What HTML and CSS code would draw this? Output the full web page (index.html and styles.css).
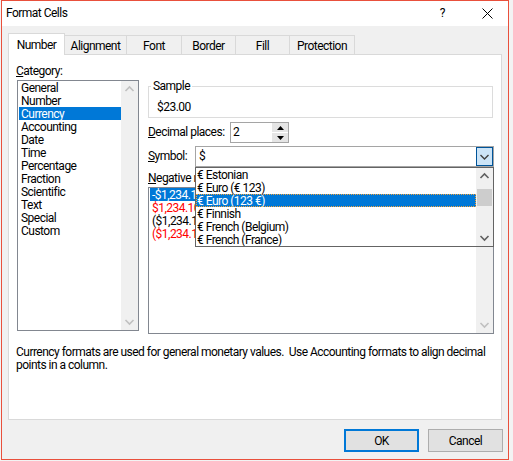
FILE: index.html
```html
<!DOCTYPE html>
<html lang="en">
<head>
    <meta charset="UTF-8">
    <title>Format Cells</title>
    <link rel="stylesheet" href="styles.css">
</head>
<body>
<div class="window">
    <div class="titlebar">
        <span class="title">Format Cells</span>
        <span class="help">?</span>
        <svg class="close" width="11" height="11" viewBox="0 0 11 11">
            <path d="M0.5 0.5L10.5 10.5M10.5 0.5L0.5 10.5" stroke="#000" stroke-width="1"/>
        </svg>
    </div>

    <div class="tabs">
        <div class="tab active tab-number">Number</div>
        <div class="tab tab-alignment">Alignment</div>
        <div class="tab tab-font">Font</div>
        <div class="tab tab-border">Border</div>
        <div class="tab tab-fill">Fill</div>
        <div class="tab tab-protection">Protection</div>
    </div>

    <div class="panel">
        <div class="columns">
            <div class="cat-col">
                <div class="label"><u>C</u>ategory:</div>
                <div class="listbox cat-list">
                    <ul class="items">
                        <li>General</li>
                        <li>Number</li>
                        <li class="selected">Currency</li>
                        <li>Accounting</li>
                        <li>Date</li>
                        <li>Time</li>
                        <li>Percentage</li>
                        <li>Fraction</li>
                        <li>Scientific</li>
                        <li>Text</li>
                        <li>Special</li>
                        <li>Custom</li>
                    </ul>
                    <div class="vscroll disabled">
                        <svg class="arrow" width="17" height="17"><polyline points="4.5,10 8.5,6 12.5,10"/></svg>
                        <svg class="arrow" width="17" height="17"><polyline points="4.5,7 8.5,11 12.5,7"/></svg>
                    </div>
                </div>
            </div>

            <div class="right-col">
                <fieldset class="sample">
                    <legend>Sample</legend>
                    <div class="sample-value">$23.00</div>
                </fieldset>

                <div class="field-row decimals">
                    <label><u>D</u>ecimal places:</label>
                    <div class="spin-input">
                        <span class="value">2</span>
                        <div class="spinner">
                            <span class="spin-btn"><svg width="7" height="4"><polygon points="0,4 3.5,0 7,4"/></svg></span>
                            <span class="spin-btn"><svg width="7" height="4"><polygon points="0,0 3.5,4 7,0"/></svg></span>
                        </div>
                    </div>
                </div>

                <div class="field-row symbol">
                    <label><u>S</u>ymbol:</label>
                    <div class="combo">
                        <span class="value">$</span>
                        <span class="drop-btn">
                            <svg width="15" height="17"><polyline points="3.5,7 7.5,11 11.5,7"/></svg>
                        </span>
                        <div class="dropdown">
                            <ul class="items">
                                <li>€ Estonian</li>
                                <li>€ Euro (€ 123)</li>
                                <li class="selected focus">€ Euro (123 €)</li>
                                <li>€ Finnish</li>
                                <li>€ French (Belgium)</li>
                                <li>€ French (France)</li>
                            </ul>
                            <div class="vscroll">
                                <svg class="arrow" width="17" height="17"><polyline points="4.5,10 8.5,6 12.5,10"/></svg>
                                <div class="thumb"></div>
                                <svg class="arrow down" width="17" height="17"><polyline points="4.5,7 8.5,11 12.5,7"/></svg>
                            </div>
                        </div>
                    </div>
                </div>

                <div class="label neg-label"><u>N</u>egative numbers:</div>
                <div class="listbox neg-list">
                    <ul class="items">
                        <li class="selected">-$1,234.10</li>
                        <li class="red">$1,234.10</li>
                        <li>($1,234.10)</li>
                        <li class="red">($1,234.10)</li>
                    </ul>
                    <div class="vscroll disabled">
                        <svg class="arrow" width="17" height="17"><polyline points="4.5,10 8.5,6 12.5,10"/></svg>
                        <svg class="arrow" width="17" height="17"><polyline points="4.5,7 8.5,11 12.5,7"/></svg>
                    </div>
                </div>
            </div>
        </div>

        <p class="desc">Currency formats are used for general monetary values.&nbsp; Use Accounting formats to align decimal points in a column.</p>
    </div>

    <div class="buttons">
        <button class="btn default">OK</button>
        <button class="btn">Cancel</button>
    </div>
</div>
</body>
</html>
```

FILE: styles.css
```css
* {
    box-sizing: border-box;
}

body {
    margin: 0;
    width: 513px;
    height: 461px;
    overflow: hidden;
    background: #f3f3f3;
    font-family: Roboto, "Noto Sans", sans-serif;
    font-size: 12px;
    letter-spacing: -0.52px;
    line-height: 13px;
    color: #000;
}

.window {
    margin-left: 1px;
    width: 508px;
    height: 460px;
    border: 1px solid #e9503c;
    background: #f0f0f0;
}

/* title bar */

.titlebar {
    height: 25px;
    background: #fff;
    display: flex;
    align-items: center;
}

.title {
    margin-left: 4px;
    flex: 1;
}

.help {
    margin-right: 37px;
}

.close {
    margin-right: 15px;
}

/* tabs */

.tabs {
    display: flex;
    align-items: flex-end;
    height: 21px;
    margin: 7px 0 0 6px;
}

.tab {
    height: 19px;
    padding-top: 2px;
    line-height: 17px;
    text-align: center;
    border: 1px solid #d9d9d9;
    border-bottom: 0;
    margin-left: -1px;
    background: #f0f0f0;
}

.tab.active {
    height: 22px;
    margin-left: 0;
    margin-bottom: -1px;
    padding-top: 3px;
    line-height: 17px;
    background: #fff;
    position: relative;
    z-index: 1;
}

.tab-number { width: 57px; }
.tab-alignment { width: 63px; }
.tab-font { width: 56px; }
.tab-border { width: 55px; }
.tab-fill { width: 55px; }
.tab-protection { width: 66px; }

/* panel */

.panel {
    margin: 0 6px;
    height: 366px;
    border: 1px solid #d9d9d9;
    background: #fff;
    padding: 9px 0 0 7px;
}

.columns {
    display: flex;
    align-items: flex-start;
}

.label {
    line-height: 14px;
}

.cat-col {
    display: flex;
    flex-direction: column;
}

.listbox {
    border: 1px solid #828790;
    background: #fff;
    display: flex;
}

.cat-list {
    width: 122px;
    height: 251px;
    margin: 2px 0 0 1px;
}

.items {
    flex: 1;
    list-style: none;
    margin: 0;
    padding: 0;
    overflow: hidden;
}

.items li {
    height: 13px;
    line-height: 14px;
    margin-left: 1px;
    padding-left: 2px;
    white-space: nowrap;
}

.items li.selected {
    background: #0078d7;
    color: #fff;
}

.items li.red {
    color: #ff0000;
}

.vscroll {
    width: 17px;
    background: #f0f0f0;
    display: flex;
    flex-direction: column;
    justify-content: space-between;
}

.arrow polyline {
    fill: none;
    stroke: #606060;
    stroke-width: 1.6;
}

.vscroll.disabled .arrow polyline {
    stroke: #c0c0c0;
}

.right-col {
    margin-left: 9px;
    width: 346px;
}

.sample {
    width: 345px;
    margin: 15px 0 0;
    padding: 7px 2px 3px;
    border: 1px solid #dcdcdc;
}

.sample legend {
    padding: 0 2px;
    line-height: 14px;
}

.sample-value {
    padding-left: 6px;
    line-height: 14px;
}

.field-row {
    display: flex;
    align-items: center;
}

.decimals {
    margin-top: 4px;
}

.decimals label {
    width: 82px;
}

.spin-input {
    width: 59px;
    height: 21px;
    border: 1px solid #a5a5a5;
    display: flex;
}

.spin-input .value {
    flex: 1;
    padding-left: 2px;
    line-height: 19px;
}

.spinner {
    width: 16px;
    display: flex;
    flex-direction: column;
    gap: 1px;
}

.spin-btn {
    height: 9px;
    background: #e5e5e5;
    display: flex;
    align-items: center;
    justify-content: center;
}

.spin-btn polygon {
    fill: #000;
}

.symbol {
    margin-top: 3px;
}

.symbol label {
    width: 47px;
}

.combo {
    position: relative;
    width: 299px;
    height: 21px;
    border: 1px solid #a5a5a5;
    display: flex;
}

.combo .value {
    flex: 1;
    padding-left: 3px;
    line-height: 19px;
}

.drop-btn {
    width: 17px;
    height: 19px;
    border: 1px solid #005499;
    background: #cce4f7;
}

.drop-btn svg {
    display: block;
}

.drop-btn polyline {
    fill: none;
    stroke: #404040;
    stroke-width: 1.4;
}

.dropdown {
    position: absolute;
    top: 20px;
    left: -1px;
    width: 299px;
    height: 80px;
    border: 1px solid #646464;
    background: #fff;
    display: flex;
    z-index: 2;
}

.dropdown .items li {
    margin-left: 0;
    padding-left: 1px;
}

.dropdown .items li.focus {
    outline: 1px dotted #f3a33b;
    outline-offset: -1px;
}

.dropdown .vscroll {
    justify-content: flex-start;
}

.thumb {
    height: 17px;
    margin: 4px 1px 0;
    background: #cdcdcd;
}

.dropdown .arrow.down {
    margin-top: auto;
}

.neg-label {
    margin-top: 4px;
}

.neg-list {
    width: 346px;
    height: 147px;
    margin-top: 2px;
}

.desc {
    margin: 12px 0 0;
    line-height: 13px;
}

/* buttons */

.buttons {
    display: flex;
    justify-content: flex-end;
    gap: 9px;
    margin-top: 9px;
    padding-right: 5px;
}

.btn {
    width: 75px;
    height: 23px;
    border: 1px solid #adadad;
    background: #e1e1e1;
    font-family: inherit;
    font-size: 12px;
    letter-spacing: inherit;
    color: #000;
    padding: 0;
}

.btn.default {
    border: 2px solid #0078d7;
}
```
